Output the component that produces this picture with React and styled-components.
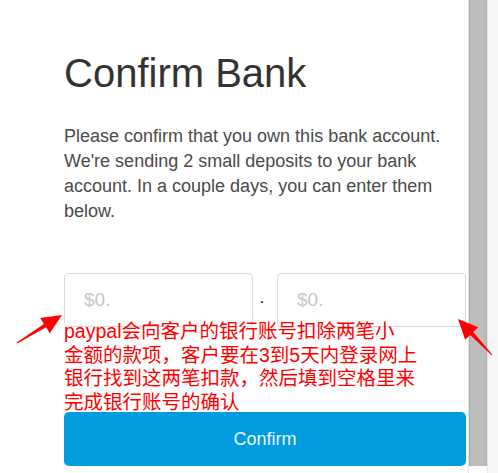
import React from 'react'
import styled, { createGlobalStyle } from 'styled-components'

const GlobalStyle = createGlobalStyle`
    html, body {
        margin: 0;
        padding: 0;
        background: #fff;
    }
`

const Frame = styled.div`
    position: relative;
    display: flex;
    width: 498px;
    height: 473px;
    overflow: hidden;
    font-family: "Liberation Sans", Arial, sans-serif;
`

const Main = styled.div`
    flex: 0 0 469px;
    box-sizing: border-box;
    padding: 49px 2px 0 64px;
    display: flex;
    flex-direction: column;
    border-right: 1px solid #e4e4e4;
`

const Track = styled.div`
    flex: 0 0 16px;
    height: 466px;
    background: #bdbdbd;
    border-left: 1px solid #ababab;
    border-right: 1px solid #ababab;
`

const Gutter = styled.div`
    flex: 1;
    background: #f7f7f7;
    border-left: 1px solid #e8e8e8;
`

const Title = styled.h1`
    margin: 0;
    font-size: 40px;
    line-height: 48px;
    font-weight: normal;
    color: #333;
`

const Text = styled.p`
    margin: 27px 0 0;
    font-size: 18px;
    line-height: 25px;
    color: #4a4a4a;
`

const Fields = styled.div`
    display: grid;
    grid-template-columns: 189px 1fr 189px;
    margin-top: 49px;
    align-items: center;
`

const Field = styled.div`
    box-sizing: border-box;
    height: 54px;
    border: 1px solid #d8dbde;
    border-radius: 4px;
    padding-left: 19px;
    display: flex;
    align-items: center;
    font-size: 19px;
    color: #c2c6ca;
`

const Dot = styled.span`
    text-align: center;
    font-size: 16px;
    line-height: 1;
    color: #000;
    margin: -4px 6px 0 0;
`

const Note = styled.div`
    position: relative;
    margin-top: -7px;
    font-family: "Liberation Sans", "Noto Sans CJK SC", sans-serif;
    font-size: 19.5px;
    line-height: 23.5px;
    color: #ff0000;
`

const NoteLine = styled.div`
    white-space: nowrap;
`

const Button = styled.button`
    margin-top: -2px;
    height: 54px;
    width: 100%;
    border: none;
    border-radius: 5px;
    background: #009cde;
    color: #e9f5fb;
    font-family: "Liberation Sans", Arial, sans-serif;
    font-size: 18px;
`

const Arrows = styled.svg`
    position: absolute;
    left: 0;
    top: 0;
    pointer-events: none;
`

const noteLines = [
    'paypal会向客户的银行账号扣除两笔小',
    '金额的款项，客户要在3到5天内登录网上',
    '银行找到这两笔扣款，然后填到空格里来',
    '完成银行账号的确认',
]

const App = () => {
    return (
        <>
            <GlobalStyle />
            <Frame>
                <Main>
                    <Title>Confirm Bank</Title>
                    <Text>
                        Please confirm that you own this bank account. We're sending 2 small deposits to your bank account. In a couple days, you can enter them below.
                    </Text>
                    <Fields>
                        <Field>$0.</Field>
                        <Dot>.</Dot>
                        <Field>$0.</Field>
                    </Fields>
                    <Note>
                        {noteLines.map((line) => (
                            <NoteLine key={line}>{line}</NoteLine>
                        ))}
                    </Note>
                    <Button>Confirm</Button>
                </Main>
                <Track />
                <Gutter />
                <Arrows width="498" height="473" viewBox="0 0 498 473">
                    <polygon
                        fill="#ff0000"
                        points="17.3,343.4 46.1,327.3 49.8,333.3 62,315 40.2,317.9 43.9,323.9 16.7,342.6"
                    />
                    <polygon
                        fill="#ff0000"
                        points="492.4,354.7 473.2,332.1 478.3,327.3 458,319 465.2,339.7 470.2,334.9 491.6,355.3"
                    />
                </Arrows>
            </Frame>
        </>
    )
}

export default App
